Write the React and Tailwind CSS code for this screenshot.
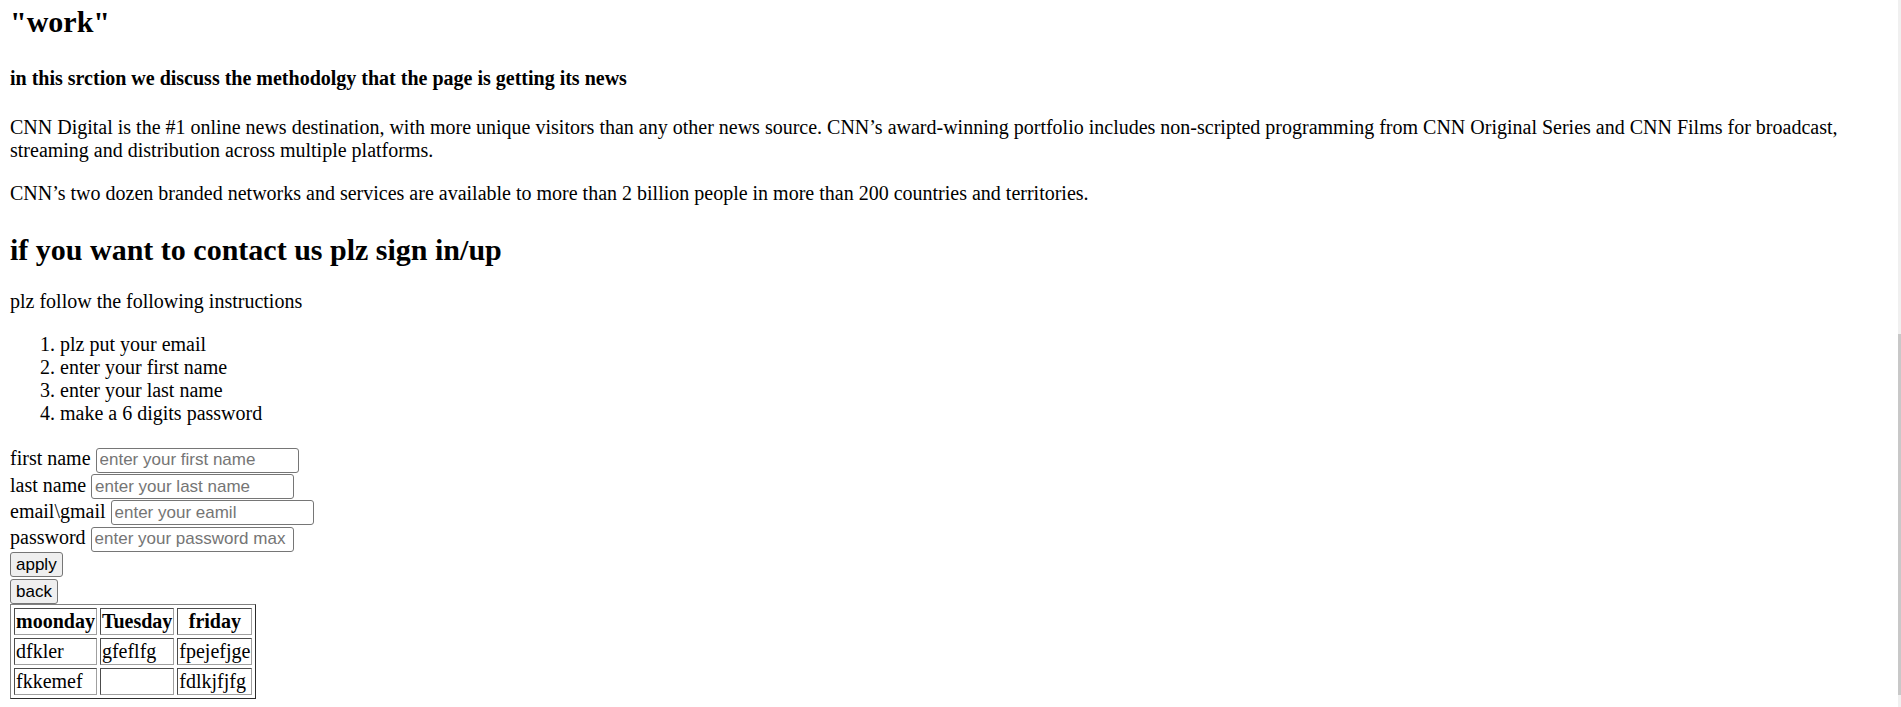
import React from 'react';

const fields = [
  { label: 'first name', type: 'text', placeholder: 'enter your first name' },
  { label: 'last name', type: 'text', placeholder: 'enter your last name' },
  { label: 'email\\gmail', type: 'email', placeholder: 'enter your eamil' },
  { label: 'password', type: 'password', placeholder: 'enter your password max 6 digits' },
];

const steps = [
  'plz put your email',
  'enter your first name',
  'enter your last name',
  'make a 6 digits password',
];

const rows = [
  ['dfkler', 'gfeflfg', 'fpejefjge'],
  ['fkkemef', '', 'fdlkjfjfg'],
];

const App = () => {
  return (
    <div className="flex w-full h-[707px] overflow-hidden bg-white text-black">
      <main className="flex-1 min-w-0 px-[10px] pt-[5px] text-[20px] leading-[normal] font-['Liberation_Serif',serif]">
        <h2 className="text-[30px] leading-[normal] font-bold mb-[27.8px]">"work"</h2>
        <h4 className="text-[20px] leading-[normal] font-bold mb-[26.6px]">
          in this srction we discuss the methodolgy that the page is getting its news
        </h4>
        <p className="mb-[20px]">
          CNN Digital is the #1 online news destination, with more unique visitors than any other news source. CNN’s award-winning portfolio includes non-scripted programming from CNN Original Series and CNN Films for broadcast, streaming and distribution across multiple platforms.
        </p>
        <p className="mb-[27.3px]">
          CNN’s two dozen branded networks and services are available to more than 2 billion people in more than 200 countries and territories.
        </p>

        <h2 className="text-[30px] leading-[normal] font-bold mb-[23.7px]">if you want to contact us plz sign in/up</h2>
        <p className="mb-[20px]">plz follow the following instructions</p>
        <ol className="list-decimal pl-[50px] mb-[22px]">
          {steps.map((s) => (
            <li key={s}>{s}</li>
          ))}
        </ol>

        <form onSubmit={(e) => e.preventDefault()}>
          {fields.map((f) => (
            <div key={f.label} className="h-[26.25px]">
              {f.label}{' '}
              <input
                type={f.type}
                placeholder={f.placeholder}
                className="w-[203px] h-[25px] px-[3px] align-baseline border border-[#767676] rounded-[3px] bg-white text-[17px] font-['Liberation_Sans',Arial,sans-serif] placeholder:text-[#757575] outline-none"
              />
            </div>
          ))}
          <div className="h-[26.25px]">
            <button
              type="submit"
              className="h-[25px] px-[5px] border border-[#767676] rounded-[3px] bg-[#efefef] text-[17px] leading-none font-['Liberation_Sans',Arial,sans-serif]"
            >
              apply
            </button>
          </div>
          <div className="h-[25.5px]">
            <button
              type="button"
              className="h-[25px] px-[5px] border border-[#767676] rounded-[3px] bg-[#efefef] text-[17px] leading-none font-['Liberation_Sans',Arial,sans-serif]"
            >
              back
            </button>
          </div>
        </form>

        <table className="border-separate border-spacing-[3px] border border-[#808080] [border-style:outset]">
          <thead>
            <tr>
              {['moonday', 'Tuesday', 'friday'].map((d) => (
                <th key={d} className="p-[1px] font-bold text-center border border-[#a0a0a0] [border-style:inset]">
                  {d}
                </th>
              ))}
            </tr>
          </thead>
          <tbody>
            {rows.map((r, i) => (
              <tr key={i}>
                {r.map((c, j) => (
                  <td key={j} className="p-[1px] text-left border border-[#a0a0a0] [border-style:inset]">
                    {c}
                  </td>
                ))}
              </tr>
            ))}
          </tbody>
        </table>
      </main>

      <aside className="relative w-[3px] shrink-0 bg-[#f0f0f0]">
        <div className="absolute left-0 right-0 top-[334px] h-[361px] bg-[#c8c8c8]" />
      </aside>
    </div>
  );
};

export default App;
